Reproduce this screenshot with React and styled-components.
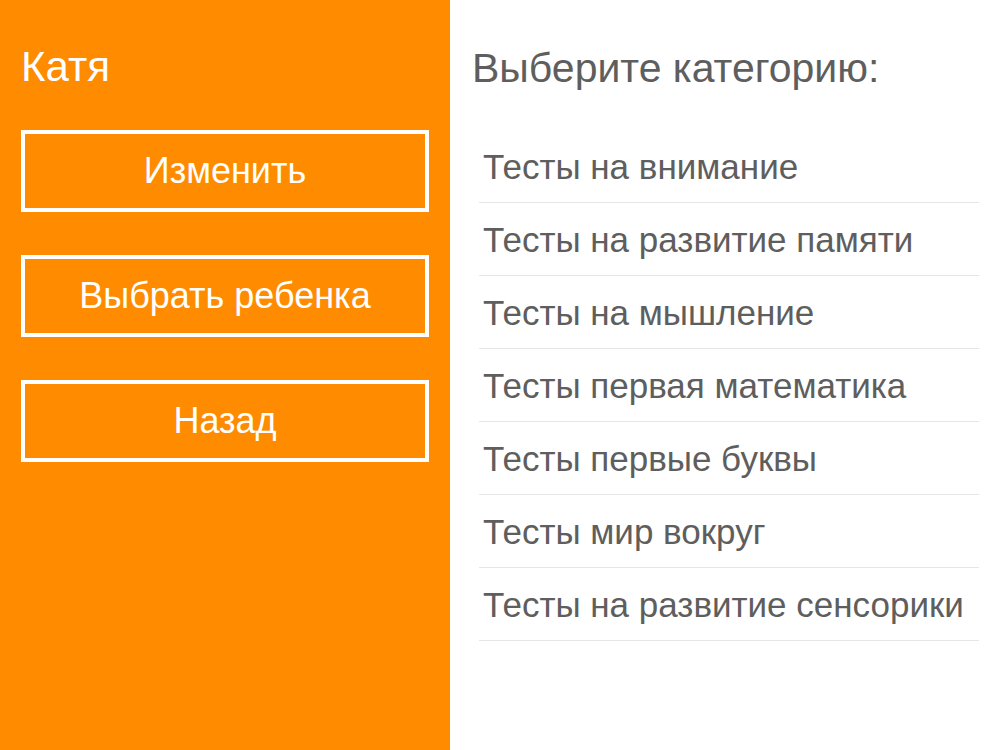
import React from 'react'
import styled, { createGlobalStyle } from 'styled-components'

const GlobalStyle = createGlobalStyle`
    html, body {
        margin: 0;
        padding: 0;
        background: #ffffff;
    }
    body {
        font-family: "Liberation Sans", Arial, sans-serif;
    }
`

const Screen = styled.div`
    display: flex;
    width: 1000px;
    height: 750px;
    overflow: hidden;
`

const Sidebar = styled.div`
    width: 450px;
    flex-shrink: 0;
    background: #ff8b00;
    padding: 43px 21px 0 21px;
    box-sizing: border-box;
    display: flex;
    flex-direction: column;
`

const ChildName = styled.div`
    color: #ffffff;
    font-size: 42px;
    line-height: 48px;
    margin-bottom: 39px;
`

const Actions = styled.div`
    display: flex;
    flex-direction: column;
    gap: 43px;
`

const ActionButton = styled.button`
    height: 82px;
    width: 100%;
    box-sizing: border-box;
    border: 4px solid #ffffff;
    background: transparent;
    color: #ffffff;
    font-family: inherit;
    font-size: 36px;
    display: flex;
    align-items: center;
    justify-content: center;
    padding: 0;
    cursor: pointer;
`

const Content = styled.div`
    flex: 1;
    padding: 45px 21px 0 22px;
    display: flex;
    flex-direction: column;
`

const Heading = styled.div`
    color: #5e5e5e;
    font-size: 41px;
    line-height: 47px;
    margin-bottom: 38px;
`

const CategoryList = styled.ul`
    list-style: none;
    margin: 0;
    padding: 0 0 0 7px;
`

const Category = styled.li`
    color: #5e5e5e;
    font-size: 35px;
    line-height: 40px;
    padding: 17px 0 15px 4px;
    border-bottom: 1px solid #e6e6e6;
    cursor: pointer;
`

const actions = ['Изменить', 'Выбрать ребенка', 'Назад']

const categories = [
    'Тесты на внимание',
    'Тесты на развитие памяти',
    'Тесты на мышление',
    'Тесты первая математика',
    'Тесты первые буквы',
    'Тесты мир вокруг',
    'Тесты на развитие сенсорики',
]

const App = () => (
    <Screen>
        <GlobalStyle />
        <Sidebar>
            <ChildName>Катя</ChildName>
            <Actions>
                {actions.map(label => (
                    <ActionButton key={label}>{label}</ActionButton>
                ))}
            </Actions>
        </Sidebar>
        <Content>
            <Heading>Выберите категорию:</Heading>
            <CategoryList>
                {categories.map(title => (
                    <Category key={title}>{title}</Category>
                ))}
            </CategoryList>
        </Content>
    </Screen>
)

export default App
